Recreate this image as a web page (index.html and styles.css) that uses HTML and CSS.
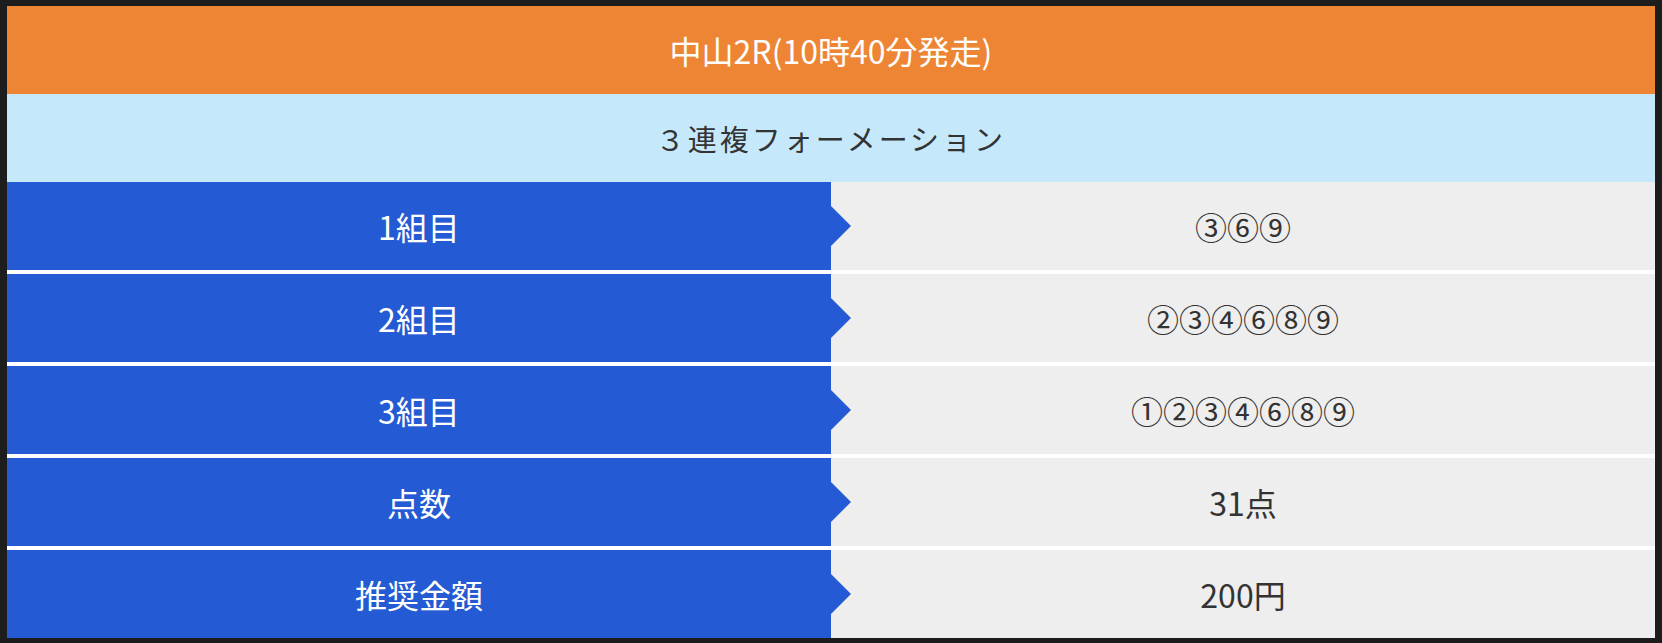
FILE: index.html
```html
<!DOCTYPE html>
<html lang="ja">
<head>
<meta charset="utf-8">
<title>中山2R</title>
<link rel="stylesheet" href="styles.css">
</head>
<body>
<div class="frame">
  <div class="race">中山2R(10時40分発走)</div>
  <div class="bet">３連複フォーメーション</div>
  <div class="rows">
    <div class="row"><div class="label">1組目</div><div class="value">③⑥⑨</div></div>
    <div class="row"><div class="label">2組目</div><div class="value">②③④⑥⑧⑨</div></div>
    <div class="row"><div class="label">3組目</div><div class="value">①②③④⑥⑧⑨</div></div>
    <div class="row"><div class="label">点数</div><div class="value">31点</div></div>
    <div class="row"><div class="label">推奨金額</div><div class="value">200円</div></div>
  </div>
</div>
</body>
</html>
```
FILE: styles.css
```css
html, body {
  margin: 0;
  padding: 0;
  background: #1d1d1d;
}
body {
  font-family: "Noto Sans CJK JP", "Noto Sans", sans-serif;
}
.frame {
  padding: 6px 7px 5px 7px;
  background: #1d1d1d;
}
.race {
  height: 88px;
  background: #ee8534;
  color: #ffffff;
  font-size: 32px;
  display: flex;
  align-items: center;
  justify-content: center;
}
.bet {
  height: 88px;
  background: #c5e9fb;
  color: #333333;
  font-size: 29px;
  letter-spacing: 3px;
  display: flex;
  align-items: center;
  justify-content: center;
}
.rows {
  display: grid;
  row-gap: 4px;
  background: #ffffff;
}
.row {
  display: grid;
  grid-template-columns: 824px 1fr;
  height: 88px;
}
.label {
  position: relative;
  background: #245ad3;
  color: #ffffff;
  font-size: 32px;
  display: flex;
  align-items: center;
  justify-content: center;
}
.label::after {
  content: "";
  position: absolute;
  right: -20px;
  top: 50%;
  margin-top: -20px;
  border-left: 20px solid #245ad3;
  border-top: 20px solid transparent;
  border-bottom: 20px solid transparent;
}
.value {
  background: #eeeeee;
  color: #333333;
  font-size: 32px;
  display: flex;
  align-items: center;
  justify-content: center;
}
```
